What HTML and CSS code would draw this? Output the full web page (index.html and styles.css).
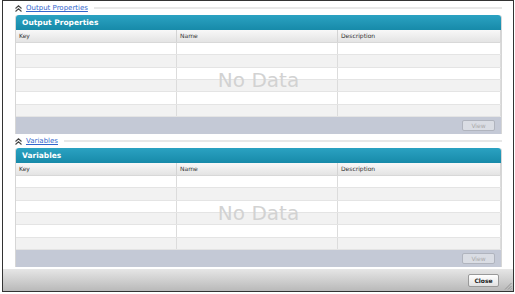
FILE: index.html
```html
<!DOCTYPE html>
<html lang="en">
<head>
    <meta charset="UTF-8">
    <title>Properties</title>
    <link rel="stylesheet" href="styles.css">
</head>
<body>
    <div class="frame">
        <div class="content">

            <div class="section-head">
                <svg class="collapse" width="7" height="7" viewBox="0 0 7 7">
                    <path d="M0.5 3.5 L3.5 0.8 L6.5 3.5 M0.5 6.5 L3.5 3.8 L6.5 6.5" fill="none" stroke="#444" stroke-width="1.1"/>
                </svg>
                <a href="#" class="section-link">Output Properties</a>
                <div class="section-line"></div>
            </div>

            <div class="panel">
                <div class="panel-title">Output Properties</div>
                <div class="grid-head">
                    <div class="cell">Key</div>
                    <div class="cell">Name</div>
                    <div class="cell">Description</div>
                </div>
                <div class="grid-body">
                    <div class="row"><div class="cell"></div><div class="cell"></div><div class="cell"></div></div>
                    <div class="row"><div class="cell"></div><div class="cell"></div><div class="cell"></div></div>
                    <div class="row"><div class="cell"></div><div class="cell"></div><div class="cell"></div></div>
                    <div class="row"><div class="cell"></div><div class="cell"></div><div class="cell"></div></div>
                    <div class="row"><div class="cell"></div><div class="cell"></div><div class="cell"></div></div>
                    <div class="row"><div class="cell"></div><div class="cell"></div><div class="cell"></div></div>
                    <div class="no-data">No Data</div>
                </div>
                <div class="toolbar">
                    <button class="view-button" disabled>View</button>
                </div>
            </div>

            <div class="section-head">
                <svg class="collapse" width="7" height="7" viewBox="0 0 7 7">
                    <path d="M0.5 3.5 L3.5 0.8 L6.5 3.5 M0.5 6.5 L3.5 3.8 L6.5 6.5" fill="none" stroke="#444" stroke-width="1.1"/>
                </svg>
                <a href="#" class="section-link">Variables</a>
                <div class="section-line"></div>
            </div>

            <div class="panel">
                <div class="panel-title">Variables</div>
                <div class="grid-head">
                    <div class="cell">Key</div>
                    <div class="cell">Name</div>
                    <div class="cell">Description</div>
                </div>
                <div class="grid-body">
                    <div class="row"><div class="cell"></div><div class="cell"></div><div class="cell"></div></div>
                    <div class="row"><div class="cell"></div><div class="cell"></div><div class="cell"></div></div>
                    <div class="row"><div class="cell"></div><div class="cell"></div><div class="cell"></div></div>
                    <div class="row"><div class="cell"></div><div class="cell"></div><div class="cell"></div></div>
                    <div class="row"><div class="cell"></div><div class="cell"></div><div class="cell"></div></div>
                    <div class="row"><div class="cell"></div><div class="cell"></div><div class="cell"></div></div>
                    <div class="no-data">No Data</div>
                </div>
                <div class="toolbar">
                    <button class="view-button" disabled>View</button>
                </div>
            </div>

        </div>

        <div class="footer">
            <button class="close-button">Close</button>
            <svg class="grip" width="8" height="8" viewBox="0 0 8 8">
                <path d="M7.5 1 L1 7.5 M7.5 4 L4 7.5 M7.5 6.5 L6.5 7.5" stroke="#888" stroke-width="0.8"/>
            </svg>
        </div>
    </div>
</body>
</html>
```

FILE: styles.css
```css
body {
    margin: 0;
    padding: 0;
    background-color: white;
    font-family: "DejaVu Sans", Verdana, sans-serif;
}

.frame {
    margin-left: 2px;
    width: 512px;
    height: 292px;
    box-sizing: border-box;
    border: 1px solid #333;
    display: flex;
    flex-direction: column;
    background-color: white;
}

.content {
    flex: 1;
    padding: 0 11px 0 12px;
}

.section-head {
    display: flex;
    align-items: center;
    height: 14px;
}

.collapse {
    margin-right: 4px;
}

.section-link {
    font-size: 7px;
    color: #3366cc;
    text-decoration: underline;
    margin-right: 6px;
}

.section-line {
    flex: 1;
    height: 2px;
    background-color: #e8e8e8;
}

.panel {
    border-left: 1px solid #d6d6d6;
    border-right: 1px solid #d6d6d6;
    border-radius: 3px 3px 0 0;
}

.panel-title {
    height: 15px;
    line-height: 15px;
    padding-left: 6px;
    font-size: 7.5px;
    font-weight: bold;
    color: white;
    background: linear-gradient(#2ba2c2, #178aa9);
    border-radius: 3px 3px 0 0;
}

.grid-head {
    display: grid;
    grid-template-columns: 161px 161px 1fr;
    height: 13px;
    background: linear-gradient(#f8f8f8, #e4e4e4);
    border-bottom: 1px solid #d8d8d8;
    box-sizing: border-box;
}

.grid-head .cell {
    font-size: 6px;
    line-height: 12px;
    color: #333;
    padding-left: 3px;
    border-right: 1px solid #d4d4d4;
}

.grid-body {
    position: relative;
    height: 74px;
    display: flex;
    flex-direction: column;
}

.row {
    flex: 1;
    display: grid;
    grid-template-columns: 161px 161px 1fr;
    border-bottom: 1px solid #e4e4e4;
}

.row:nth-child(even) {
    background-color: #f2f2f2;
}

.row .cell {
    border-right: 1px solid #dcdcdc;
}

.no-data {
    position: absolute;
    left: 0;
    right: 0;
    top: 25px;
    text-align: center;
    font-family: "DejaVu Sans", sans-serif;
    font-size: 20px;
    color: #d2d2d2;
}

.toolbar {
    height: 17px;
    background-color: #c4c9d6;
    display: flex;
    justify-content: flex-end;
    align-items: center;
    padding-right: 6px;
}

.view-button {
    width: 33px;
    height: 11px;
    padding: 0;
    font-family: "DejaVu Sans", sans-serif;
    font-size: 6px;
    color: #aaa;
    background-color: #dadde4;
    border: 1px solid #b0b4be;
    border-radius: 2px;
}

.footer {
    height: 22px;
    margin-top: 1px;
    background: linear-gradient(#e6e6e6, #b9b9b9);
    display: flex;
    justify-content: flex-end;
    align-items: center;
    padding-right: 2px;
    position: relative;
}

.close-button {
    width: 31px;
    height: 13px;
    padding: 0;
    margin-right: 12px;
    font-family: "DejaVu Sans", sans-serif;
    font-size: 6px;
    font-weight: bold;
    color: #222;
    background: linear-gradient(#ffffff, #e2e2e2);
    border: 1px solid #999;
    border-radius: 2px;
}

.grip {
    position: absolute;
    right: 1px;
    bottom: 1px;
}
```
